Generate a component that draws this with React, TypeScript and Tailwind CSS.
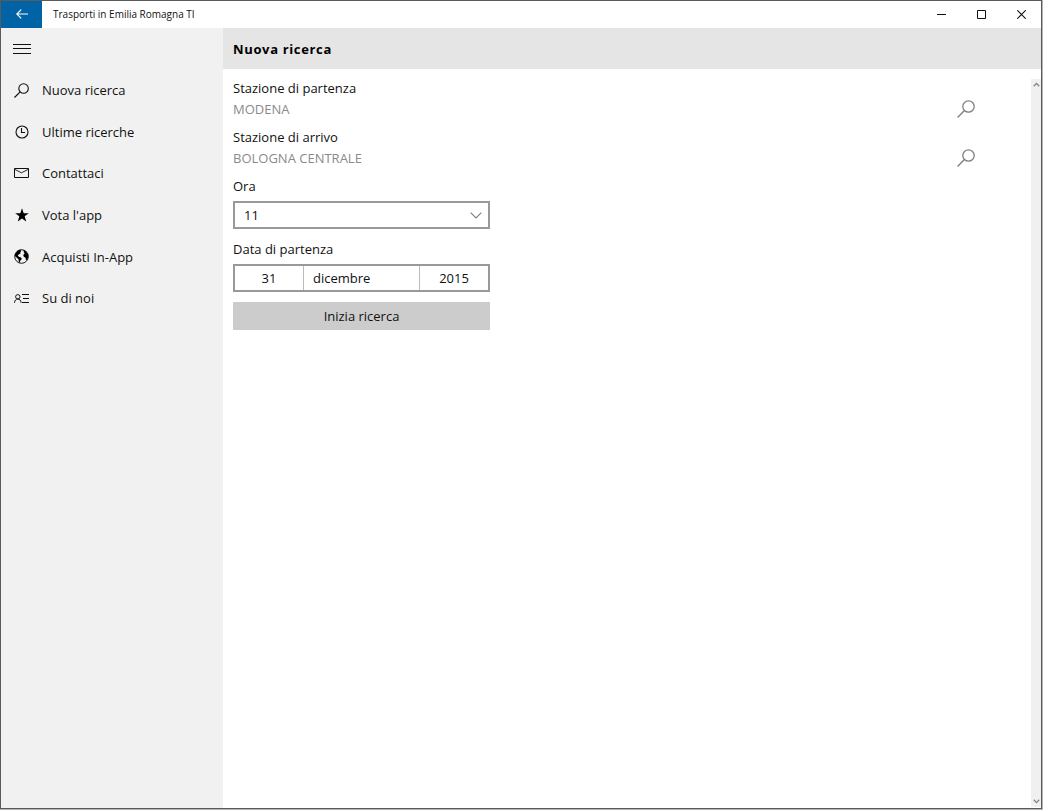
import React, { useState } from 'react';

interface IconProps {
  className?: string;
}

const SearchIcon: React.FC<IconProps> = ({ className }) => (
  <svg viewBox="0 0 18 18" className={className} fill="none" stroke="currentColor" aria-hidden="true">
    <circle cx="11.5" cy="6.5" r="5.7" strokeWidth="1.3" />
    <path d="M7.4 10.6 0.6 17.4" strokeWidth="1.4" />
  </svg>
);

const ClockIcon: React.FC = () => (
  <svg viewBox="0 0 14 14" className="size-[14px]" fill="none" stroke="currentColor" aria-hidden="true">
    <circle cx="7" cy="7" r="6" strokeWidth="1.1" />
    <path d="M6.5 3v4.5H10" strokeWidth="1.1" />
  </svg>
);

const MailIcon: React.FC = () => (
  <svg viewBox="0 0 15 10" className="h-[10px] w-[15px]" fill="none" stroke="currentColor" aria-hidden="true">
    <path d="M0.5 0.5h14v9H0.5z" />
    <path d="M0.8 1.4 7.5 4.8 14.2 1.4" strokeWidth="0.9" />
  </svg>
);

const StarIcon: React.FC = () => (
  <svg viewBox="0 0 14 14" className="size-[14px] text-black" fill="currentColor" aria-hidden="true">
    <path d="M7 0.3 8.7 5.2H13.8L9.7 8.3 11.2 13.4 7 10.4 2.8 13.4 4.3 8.3 0.2 5.2H5.3Z" />
  </svg>
);

const GlobeIcon: React.FC = () => (
  <svg viewBox="0 0 15 15" className="size-[15px] text-black" fill="currentColor" aria-hidden="true">
    <circle cx="7.5" cy="7.5" r="6.8" fill="none" stroke="currentColor" strokeWidth="0.9" />
    <path d="M1 5.5 3.2 2 6.2 0.8 7.4 1.8 6.2 3.2 6.6 4.4 5 5.2 3.8 6.6 4.8 7.8 7 8.6 7.8 10 6.4 11.4 5.8 13.6 4.8 13.2 4.6 10.4 2.6 8.4 0.8 7Z" />
    <path d="M9.4 1 12 2.2 14.2 5.6 14.2 8.6 13 11 11.8 10.8 11.6 8.8 9.8 7.8 9.2 6 10.6 4.6 9.8 3Z" />
  </svg>
);

const AboutIcon: React.FC = () => (
  <svg viewBox="0 0 15 9" className="h-[9px] w-[15px]" fill="none" stroke="currentColor" aria-hidden="true">
    <circle cx="3.8" cy="2.8" r="2.2" />
    <path d="M0.5 8.8C0.7 6.4 2 5 3.8 5s3.1 1.4 3.3 3.8" />
    <path d="M8 0.5h7M9 4.5h6M8 8.5h7" />
  </svg>
);

const Chevron: React.FC<IconProps> = ({ className }) => (
  <svg viewBox="0 0 12 7" className={className} fill="none" stroke="currentColor" aria-hidden="true">
    <path d="M0.7 0.7 6 6 11.3 0.7" strokeWidth="1.2" />
  </svg>
);

const ScrollArrow: React.FC<IconProps> = ({ className }) => (
  <svg viewBox="0 0 7 5" className={className} fill="none" stroke="currentColor" aria-hidden="true">
    <path d="M0.8 0.8 3.5 3.6 6.2 0.8" strokeWidth="1.3" />
  </svg>
);

const menuItems = [
  { label: 'Nuova ricerca', icon: <SearchIcon className="size-[15px]" /> },
  { label: 'Ultime ricerche', icon: <ClockIcon /> },
  { label: 'Contattaci', icon: <MailIcon /> },
  { label: "Vota l'app", icon: <StarIcon /> },
  { label: 'Acquisti In-App', icon: <GlobeIcon /> },
  { label: 'Su di noi', icon: <AboutIcon /> },
];

const hours = Array.from({ length: 24 }, (_, i) => String(i));

const TitleBar: React.FC = () => (
  <header className="flex h-[27px] shrink-0 items-center bg-white">
    <button
      aria-label="Indietro"
      className="flex h-full w-[41px] items-center justify-center bg-[#0063a5] pb-px text-white"
    >
      <svg viewBox="0 0 12 10" className="h-[10px] w-[12px]" fill="none" stroke="currentColor" aria-hidden="true">
        <path d="M12 5H1M5.2 0.6 0.8 5 5.2 9.4" strokeWidth="1.2" />
      </svg>
    </button>
    <span className="flex-1 pb-[2px] pl-[11px] text-[10px]">Trasporti in Emilia Romagna TI</span>
    <button aria-label="Riduci a icona" className="flex h-full w-[40px] items-center justify-center">
      <svg viewBox="0 0 9 9" className="size-[9px]" stroke="currentColor" aria-hidden="true">
        <path d="M0 4.5h9" />
      </svg>
    </button>
    <button aria-label="Ingrandisci" className="flex h-full w-[40px] items-center justify-center">
      <svg viewBox="0 0 9 9" className="size-[9px]" fill="none" stroke="currentColor" aria-hidden="true">
        <path d="M0.5 0.5h8v8h-8z" />
      </svg>
    </button>
    <button aria-label="Chiudi" className="flex h-full w-[40px] items-center justify-center">
      <svg viewBox="0 0 9 9" className="size-[9px]" stroke="currentColor" aria-hidden="true">
        <path d="M0.3 0.3 8.7 8.7M8.7 0.3 0.3 8.7" strokeWidth="1.1" />
      </svg>
    </button>
  </header>
);

const Sidebar: React.FC = () => (
  <nav className="w-[222px] shrink-0 bg-[#f1f1f1]">
    <div className="grid h-[291px] grid-rows-7">
      <button aria-label="Menu" className="flex w-[41px] items-center justify-center">
        <svg viewBox="0 0 18 11" className="h-[11px] w-[18px]" stroke="currentColor" aria-hidden="true">
          <path d="M0 1.5h18M0 5.5h18M0 10.5h18" />
        </svg>
      </button>
      {menuItems.map((item) => (
        <button key={item.label} className="flex items-center text-left hover:bg-[#e4e4e4]">
          <span className="flex w-[41px] justify-center">{item.icon}</span>
          <span>{item.label}</span>
        </button>
      ))}
    </div>
  </nav>
);

interface StationFieldProps {
  id: string;
  label: string;
  value: string;
}

const StationField: React.FC<StationFieldProps> = ({ id, label, value }) => (
  <div className="mb-2">
    <label htmlFor={id} className="block">
      {label}
    </label>
    <div className="mt-px flex h-5 items-center pr-[56px]">
      <input id={id} readOnly value={value} className="min-w-0 flex-1 bg-transparent text-[#8a8a8a] outline-none" />
      <button type="button" aria-label={`Cerca ${label}`} className="text-[#808080]">
        <SearchIcon className="size-[18px]" />
      </button>
    </div>
  </div>
);

const SearchForm: React.FC = () => {
  const [hour, setHour] = useState('11');

  return (
    <form className="min-w-0 flex-1 pl-[10px] pt-[9px]" onSubmit={(e) => e.preventDefault()}>
      <StationField id="departure" label="Stazione di partenza" value="MODENA" />
      <StationField id="arrival" label="Stazione di arrivo" value="BOLOGNA CENTRALE" />
      <div className="max-w-[257px]">
        <label htmlFor="hour" className="block">
          Ora
        </label>
        <div className="relative mt-[5px]">
          <select
            id="hour"
            value={hour}
            onChange={(e) => setHour(e.target.value)}
            className="block h-7 w-full appearance-none border-2 border-[#999999] bg-white pl-[9px] outline-none"
          >
            {hours.map((h) => (
              <option key={h}>{h}</option>
            ))}
          </select>
          <Chevron className="pointer-events-none absolute right-2 top-[11px] h-[7px] w-[12px] text-[#808080]" />
        </div>
        <div id="date-label" className="mt-[10px]">
          Data di partenza
        </div>
        <div
          role="group"
          aria-labelledby="date-label"
          className="mt-[5px] flex h-7 divide-x divide-[#bbbbbb] border-2 border-[#999999]"
        >
          <button type="button" className="w-[69px]">
            31
          </button>
          <button type="button" className="flex-1 pl-[9px] text-left">
            dicembre
          </button>
          <button type="button" className="w-[68px]">
            2015
          </button>
        </div>
        <button type="submit" className="mt-[10px] block h-7 w-full bg-[#cccccc]">
          Inizia ricerca
        </button>
      </div>
    </form>
  );
};

const App: React.FC = () => {
  return (
    <div className="flex min-h-screen flex-col bg-[#b4b4b4] pb-px pr-px font-['Open_Sans','Noto_Sans',sans-serif] text-[13px] leading-5 text-[#111111]">
      <div className="flex flex-1 flex-col border border-[#5a5a5a] bg-white">
        <TitleBar />
        <div className="flex flex-1">
          <Sidebar />
          <main className="flex min-w-0 flex-1 flex-col">
            <h1 className="flex h-[41px] items-center bg-[#e5e5e5] pl-[10px] font-bold tracking-wider text-black">
              Nuova ricerca
            </h1>
            <div className="flex flex-1">
              <SearchForm />
              <div className="mb-px mt-[10px] flex w-[10px] flex-col items-center justify-between bg-[#f0f0f0] py-[3px] text-[#808080]">
                <ScrollArrow className="h-[5px] w-[7px] rotate-180" />
                <ScrollArrow className="h-[5px] w-[7px]" />
              </div>
            </div>
          </main>
        </div>
      </div>
    </div>
  );
};

export default App;
